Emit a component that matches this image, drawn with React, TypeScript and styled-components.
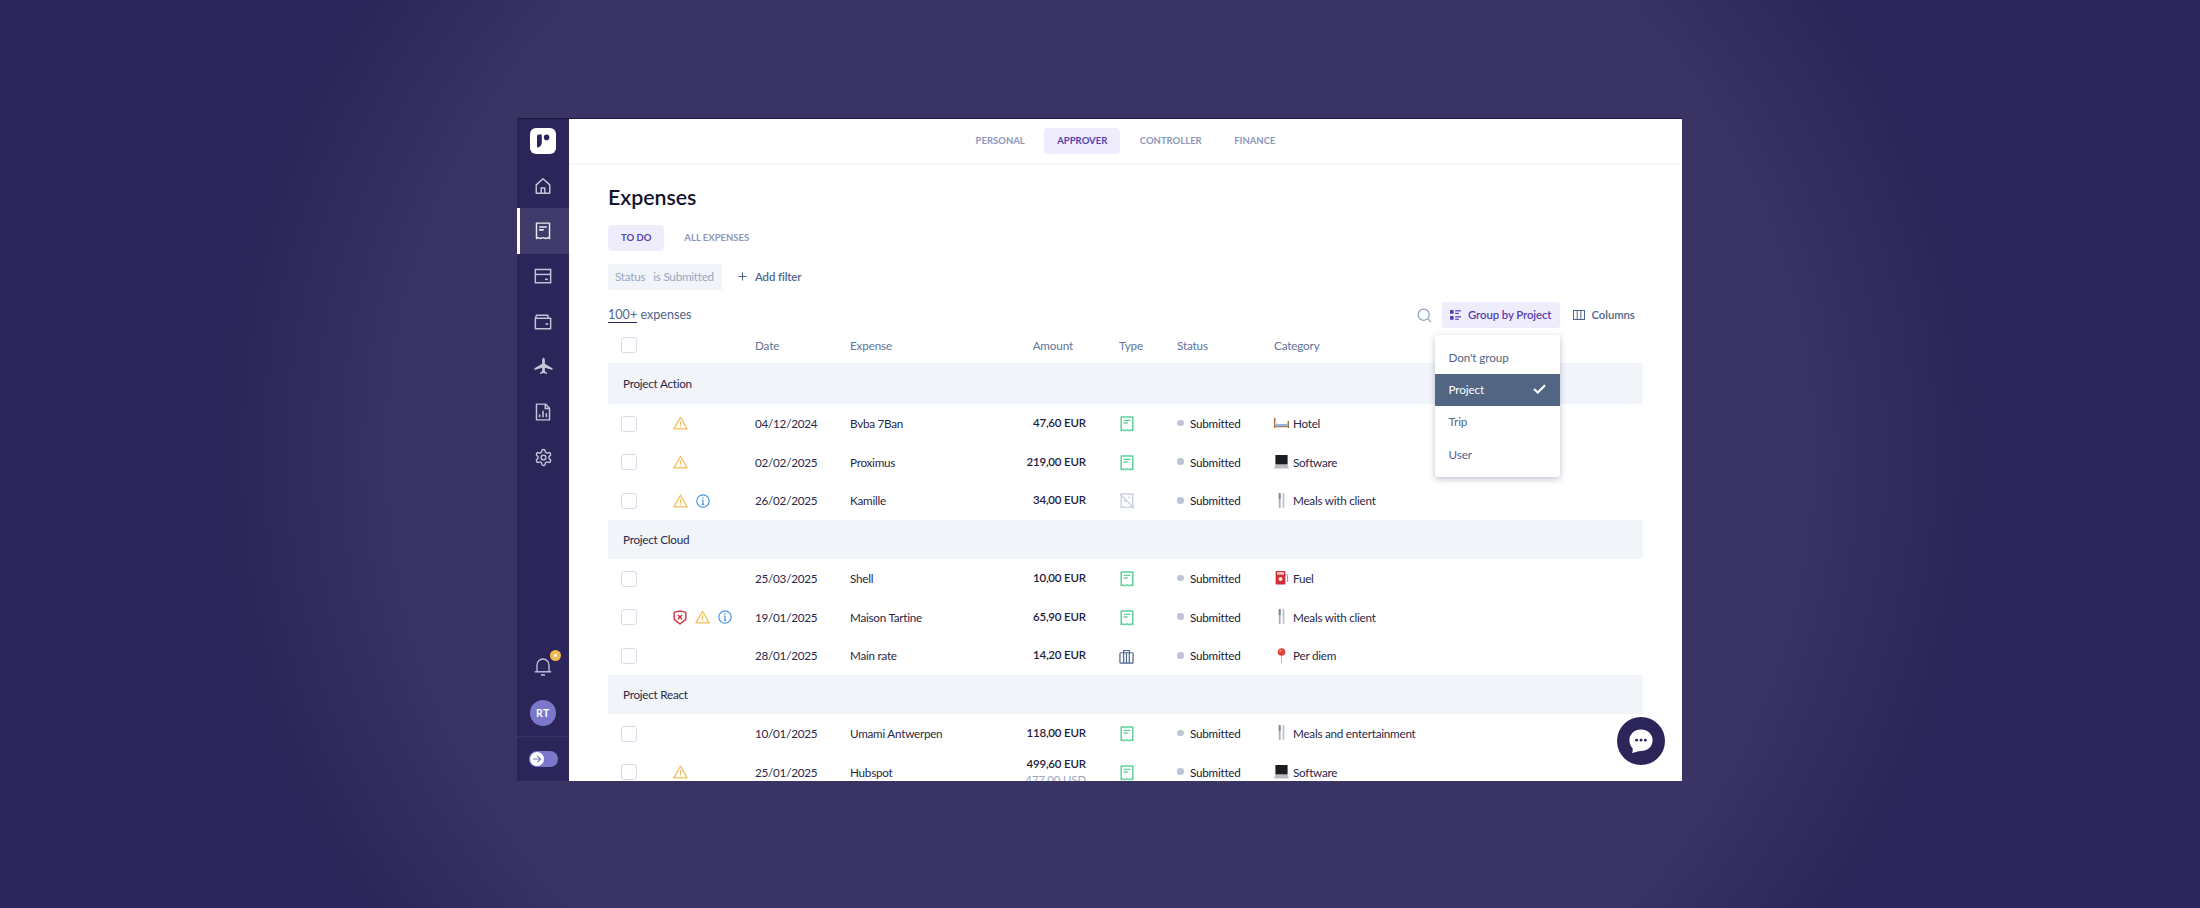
import React from "react";
import styled, { createGlobalStyle } from "styled-components";

const Global = createGlobalStyle`
  html, body { margin: 0; padding: 0; height: 100%; }
  body { font-family: "Lato", "Liberation Sans", sans-serif; overflow: hidden; }
  #root { height: 100%; }
`;

const Page = styled.div`
  width: 2200px;
  height: 908px;
  box-sizing: border-box;
  padding: 118px 0 0 517px;
  background: radial-gradient(874px 833px at 50% 50%, #3a3465 0%, #3a3465 80%, #2b2559 100%);
  overflow: hidden;
`;
const Window = styled.div`
  width: 1165px;
  height: 663px;
  display: flex;
  overflow: hidden;
  border-top: 1px solid #1e1a42;
  box-sizing: border-box;
  background: #fff;
`;
const Sidebar = styled.nav`
  width: 52px;
  flex: none;
  background: #2b2559;
  display: flex;
  flex-direction: column;
  color: #c2c6da;
`;
const LogoRow = styled.div`
  height: 44px;
  flex: none;
  display: flex;
  align-items: center;
  justify-content: center;
`;
const Logo = styled.div`
  width: 26px;
  height: 26px;
  border-radius: 6px;
  background: #fff;
  display: flex;
  align-items: center;
  justify-content: center;
`;
const NavItem = styled.div<{ $active?: boolean }>`
  height: 45.3px;
  flex: none;
  display: flex;
  align-items: center;
  justify-content: center;
  box-sizing: border-box;
  background: ${(p) => (p.$active ? "#413b6c" : "transparent")};
  border-left: 3px solid ${(p) => (p.$active ? "#fff" : "transparent")};
  padding-right: 3px;
  color: ${(p) => (p.$active ? "#e9e9f3" : "#c2c6da")};
`;
const SideBottom = styled.div`
  margin-top: auto;
  display: flex;
  flex-direction: column;
  align-items: center;
`;
const BellWrap = styled.div`
  position: relative;
  width: 18px;
  height: 20px;
  margin-bottom: 23px;
  color: #c2c6da;
`;
const Badge = styled.span`
  position: absolute;
  top: -7px;
  right: -9px;
  width: 11px;
  height: 11px;
  border-radius: 50%;
  background: #f0b94f;
  display: flex;
  align-items: center;
  justify-content: center;
  &::after {
    content: "";
    width: 3px;
    height: 3px;
    border-radius: 50%;
    background: #fff;
  }
`;
const Avatar = styled.div`
  width: 26px;
  height: 26px;
  border-radius: 50%;
  background: #7b78cb;
  color: #fff;
  font-size: 10.5px;
  font-weight: 700;
  letter-spacing: 0.5px;
  display: flex;
  align-items: center;
  justify-content: center;
`;
const SideDivider = styled.div`
  width: 100%;
  height: 1px;
  background: #3a3466;
  margin: 10px 0 14px;
`;
const Toggle = styled.div`
  width: 29px;
  height: 16.5px;
  border-radius: 9px;
  background: #7b78cb;
  display: flex;
  align-items: center;
  padding-left: 1px;
  box-sizing: border-box;
  margin-bottom: 14px;
`;
const ToggleKnob = styled.div`
  width: 14px;
  height: 14px;
  border-radius: 50%;
  background: #fff;
  color: #7b78cb;
  display: flex;
  align-items: center;
  justify-content: center;
`;
const Main = styled.main`
  flex: 1;
  min-width: 0;
  position: relative;
  display: flex;
  flex-direction: column;
`;
const TopBar = styled.header`
  height: 44px;
  flex: none;
  display: flex;
  align-items: center;
  justify-content: center;
  gap: 6.5px;
  box-shadow: 0 1px 3px rgba(43, 37, 89, 0.07);
`;
const Pill = styled.div<{ $active?: boolean }>`
  height: 26px;
  padding: 0 13px 1.5px;
  box-sizing: border-box;
  display: flex;
  align-items: center;
  border-radius: 4px;
  font-size: 9.5px;
  font-weight: 700;
  white-space: nowrap;
  text-transform: uppercase;
  background: ${(p) => (p.$active ? "#efecfc" : "transparent")};
  color: ${(p) => (p.$active ? "#5541ad" : "#8c98bb")};
`;
const Content = styled.section`
  padding: 20px 39px 0;
  display: flex;
  flex-direction: column;
`;
const Title = styled.h1`
  margin: 0;
  font-size: 21.3px;
  line-height: 28px;
  font-weight: 600;
  color: #14132e;
`;
const SubTabs = styled.div`
  display: flex;
  gap: 7px;
  margin-top: 14px;
`;
const Filters = styled.div`
  display: flex;
  align-items: center;
  margin-top: 13px;
  height: 25.5px;
`;
const FilterChip = styled.div`
  width: 114px;
  height: 100%;
  box-sizing: border-box;
  background: #f1f4f9;
  border-radius: 2px;
  padding: 0 0 1.5px 7px;
  display: flex;
  align-items: center;
  gap: 8px;
  font-size: 11.7px;
  letter-spacing: -0.25px;
  color: #99a6c2;
`;
const AddFilter = styled.div`
  margin-left: 16px;
  padding-bottom: 1.5px;
  display: flex;
  align-items: center;
  gap: 8px;
  font-size: 11.4px;
  font-weight: 600;
  letter-spacing: -0.1px;
  color: #50658a;
`;
const Toolbar = styled.div`
  margin-top: 12.5px;
  height: 26px;
  display: flex;
  align-items: center;
  justify-content: space-between;
`;
const Count = styled.div`
  font-size: 12.6px;
  padding-bottom: 1px;
  color: #50658a;
`;
const CountNum = styled.span`
  color: #50658a;
  border-bottom: 1px solid #2b2559;
`;
const Tools = styled.div`
  display: flex;
  align-items: center;
  margin-right: 7px;
  color: #50658a;
`;
const SearchIcon = styled.div`
  display: flex;
  margin-right: 10px;
  color: #8c9cbd;
`;
const GroupWrap = styled.div`
  position: relative;
`;
const GroupButton = styled.div`
  width: 117.5px;
  height: 26px;
  box-sizing: border-box;
  border-radius: 3px;
  background: #efecfc;
  color: #5541ad;
  display: flex;
  align-items: center;
  gap: 7px;
  padding: 0 0 1px 8px;
  font-size: 11.4px;
  font-weight: 600;
  letter-spacing: -0.1px;
  white-space: nowrap;
`;
const ColumnsButton = styled.div`
  width: 63.5px;
  margin-left: 13px;
  padding-bottom: 1px;
  display: flex;
  align-items: center;
  gap: 7px;
  font-size: 11.4px;
  font-weight: 600;
  letter-spacing: -0.1px;
`;
const Dropdown = styled.div`
  position: absolute;
  top: 33px;
  right: 0;
  width: 124.5px;
  height: 142px;
  padding-top: 6.5px;
  box-sizing: border-box;
  background: #fff;
  border-radius: 3px;
  box-shadow: 0 2px 6px rgba(40, 50, 90, 0.3);
  z-index: 3;
`;
const DropItem = styled.div<{ $active?: boolean }>`
  height: 32.3px;
  box-sizing: border-box;
  padding: 0 14px 2px 13.5px;
  display: flex;
  align-items: center;
  justify-content: space-between;
  font-size: 11.7px;
  letter-spacing: -0.1px;
  background: ${(p) => (p.$active ? "#526583" : "transparent")};
  color: ${(p) => (p.$active ? "#fff" : "#50658a")};
`;
const Grid = styled.div`
  display: grid;
  grid-template-columns: 65px 82px 95px 130px 106px 33px 58px 97px 1fr;
  align-items: center;
  box-sizing: border-box;
`;
const HeadRow = styled(Grid)`
  height: 35px;
  padding-bottom: 1.5px;
  font-size: 11.7px;
  letter-spacing: -0.15px;
  color: #61749a;
`;
const GroupRow = styled.div<{ $first?: boolean }>`
  height: ${(p) => (p.$first ? "41px" : "38.6px")};
  box-sizing: border-box;
  background: #f1f4f9;
  padding: 0 0 1.5px 15px;
  display: flex;
  align-items: center;
  font-size: 11.7px;
  letter-spacing: -0.25px;
  color: #2a2848;
`;
const Row = styled(Grid)`
  height: 38.8px;
  padding-bottom: 1px;
  font-size: 11.7px;
  letter-spacing: -0.25px;
  color: #2a2848;
`;
const CheckCell = styled.div<{ $body?: boolean }>`
  padding-left: 13px;
  margin-top: ${(p) => (p.$body ? "1.5px" : "0")};
  display: flex;
`;
const Checkbox = styled.div`
  width: 16px;
  height: 16px;
  box-sizing: border-box;
  border: 1.5px solid #d6dce8;
  border-radius: 3px;
  background: #fff;
`;
const Flags = styled.div`
  display: flex;
  align-items: center;
  gap: 8px;
  margin-top: 1px;
`;
const Amount = styled.div`
  display: flex;
  flex-direction: column;
  align-items: flex-end;
  font-size: 11.5px;
  font-weight: 600;
  letter-spacing: -0.17px;
  color: #1f1d3f;
  line-height: 16px;
`;
const AmountSub = styled.span`
  font-weight: 400;
  color: #99a6c2;
`;
const HeadAmount = styled.div`
  text-align: right;
  padding-right: 13px;
`;
const TypeCell = styled.div`
  display: flex;
  margin-top: 2px;
`;
const Status = styled.div`
  display: flex;
  align-items: center;
  gap: 6.5px;
  color: #1a1838;
`;
const Dot = styled.span`
  width: 6.5px;
  height: 6.5px;
  border-radius: 50%;
  background: #bcc4d6;
`;
const Category = styled.div`
  display: flex;
  align-items: center;
  gap: 4px;
`;
const ChatButton = styled.div`
  position: absolute;
  right: 17px;
  bottom: 16.5px;
  width: 48px;
  height: 48px;
  border-radius: 50%;
  background: #2b2559;
  display: flex;
  align-items: center;
  justify-content: center;
  z-index: 4;
`;
const GreenMark = styled.span`
  color: #5fd29a;
  display: flex;
`;

const Svg = ({ s = 16, children, ...r }: any) => (
  <svg width={s} height={s} viewBox="0 0 16 16" fill="none" stroke="currentColor" strokeWidth={1.3} {...r}>
    {children}
  </svg>
);
const Home = () => (
  <Svg s={18}>
    <path d="M8 1.6 2 7v7.4h12V7L8 1.6Z" strokeLinejoin="round" />
    <path d="M6.4 14.4V9.8h3.2v4.6" />
  </Svg>
);
const Receipt = ({ s = 18, w = 1.3 }: { s?: number; w?: number }) => (
  <Svg s={s} strokeWidth={w}>
    <path d="M2.2 1h11.6v13.7l-1.6-.8-1.6.8-2.6-.8-2.6.8-1.6-.8-1.6.8V1Z" strokeLinejoin="round" />
    <path d="M4.6 4.4h6.8M4.6 7h4" strokeWidth={1.4} />
  </Svg>
);
const GreenReceipt = () => (
  <GreenMark>
    <Receipt s={16} w={1.5} />
  </GreenMark>
);
const NoReceipt = () => (
  <Svg s={16} style={{ color: "#c9d0e0" }}>
    <path d="M2.2 1h11.6v13.7l-2-.8-3.8.8-3.8-.8-2 .8V1Z" />
    <path d="M1 1l14 14M4.6 8h3M9 4.4h2.4" />
  </Svg>
);
const Suitcase = () => (
  <Svg s={15} style={{ color: "#50658a" }}>
    <rect x="1" y="4" width="14" height="11" rx="1" />
    <path d="M5 15V1.6h6V15M8 4v11" />
  </Svg>
);
const Card = () => (
  <Svg s={18}>
    <rect x="1.2" y="2.2" width="13.6" height="11.8" />
    <path d="M1.2 6.6h13.6" />
    <path d="M9.8 11h2.6" strokeWidth={1.4} />
  </Svg>
);
const Wallet = () => (
  <Svg s={18}>
    <path d="M1.2 4.6V14h13.6V4.6H1.2Zm0 0 1-2.6h10.2v2.6" strokeLinejoin="round" />
    <path d="M10.2 9.8h2.4" strokeWidth={1.4} />
  </Svg>
);
const Plane = () => (
  <svg width="19" height="19" viewBox="0 0 18 18" fill="currentColor">
    <path d="M9 .6c.8 0 1.3 1.2 1.3 2.6v3.2l7.2 4.3v1.6l-7.2-2.100v3.200l2 1.500v1.300L9 15.200l-3.300 1v-1.300l2-1.500v-3.200L.5 12.300v-1.600l7.200-4.300V3.200C7.700 1.800 8.200.6 9 .6Z" />
  </svg>
);
const Report = () => (
  <Svg s={18}>
    <path d="M2.2 1h8l3.6 3.6V15H2.2V1Z" strokeLinejoin="round" />
    <path d="M10 1v3.8h3.8" />
    <path d="M5 12.6v-2.4M8 12.6V6.8M11 12.6V9" strokeWidth={1.4} />
  </Svg>
);
const Gear = () => (
  <svg width="19" height="19" viewBox="0 0 24 24" fill="none" stroke="currentColor" strokeWidth="1.8" strokeLinejoin="round">
    <path d="M12.22 2h-.44a2 2 0 0 0-2 2v.18a2 2 0 0 1-1 1.73l-.43.25a2 2 0 0 1-2 0l-.15-.08a2 2 0 0 0-2.73.73l-.22.38a2 2 0 0 0 .73 2.73l.15.1a2 2 0 0 1 1 1.72v.51a2 2 0 0 1-1 1.74l-.15.09a2 2 0 0 0-.73 2.73l.22.38a2 2 0 0 0 2.73.73l.15-.08a2 2 0 0 1 2 0l.43.25a2 2 0 0 1 1 1.73V20a2 2 0 0 0 2 2h.44a2 2 0 0 0 2-2v-.18a2 2 0 0 1 1-1.73l.43-.25a2 2 0 0 1 2 0l.15.08a2 2 0 0 0 2.73-.73l.22-.39a2 2 0 0 0-.73-2.73l-.15-.08a2 2 0 0 1-1-1.74v-.5a2 2 0 0 1 1-1.74l.15-.09a2 2 0 0 0 .73-2.73l-.22-.38a2 2 0 0 0-2.73-.73l-.15.08a2 2 0 0 1-2 0l-.43-.25a2 2 0 0 1-1-1.73V4a2 2 0 0 0-2-2z" />
    <circle cx="12" cy="12" r="3" />
  </svg>
);
const Bell = () => (
  <svg width="18" height="20" viewBox="0 0 18 20" fill="none" stroke="currentColor" strokeWidth="1.3">
    <path d="M3 14.6V8a6 6 0 0 1 12 0v6.6" />
    <path d="M.8 14.8h16.4" strokeWidth="1.4" />
    <path d="M7 18h4" strokeWidth="1.5" />
  </svg>
);
const Warning = () => (
  <svg width="15" height="14" viewBox="0 0 15 14" fill="none" stroke="#f0bd5c" strokeWidth="1.2" strokeLinejoin="round">
    <path d="M7.5 1.2 .9 12.9h13.2L7.5 1.2Z" />
    <path d="M7.5 5v4.4M7.5 10.2v1" />
  </svg>
);
const Info = () => (
  <svg width="14" height="14" viewBox="0 0 14 14" fill="none" stroke="#4a94e8" strokeWidth="1.2">
    <circle cx="7" cy="7" r="6.2" />
    <path d="M7 6v4.4M5.8 10.4h2.4M5.8 6H7" />
    <path d="M7 3.2v1.2" strokeWidth="1.4" />
  </svg>
);
const Shield = () => (
  <svg width="14" height="15" viewBox="0 0 14 15" fill="none" stroke="#c8323c" strokeWidth="1.4" strokeLinejoin="round">
    <path d="M7 .9 12.8 2.4v7L7 14 1.2 9.4v-7L7 .9Z" />
    <path d="M4.9 5 9.1 9.2M9.1 5 4.9 9.2" />
  </svg>
);
const SearchGlyph = () => (
  <svg width="15" height="15" viewBox="0 0 15 15" fill="none" stroke="currentColor" strokeWidth="1.2">
    <circle cx="6.7" cy="6.7" r="5.6" />
    <path d="m10.9 10.9 3.2 3.2" />
  </svg>
);
const GroupGlyph = () => (
  <svg width="11" height="10" viewBox="0 0 11 10" fill="currentColor">
    <rect x="0" y="0" width="3.6" height="3.8" rx=".6" />
    <rect x="0" y="6" width="3.6" height="3.8" rx=".6" />
    <rect x="5.2" y=".2" width="5.8" height="1.2" />
    <rect x="5.2" y="2.8" width="3.6" height="1.2" />
    <rect x="5.2" y="6.2" width="5.8" height="1.2" />
    <rect x="5.2" y="8.6" width="3.6" height="1.2" />
  </svg>
);
const ColumnsGlyph = () => (
  <svg width="12" height="10" viewBox="0 0 12 10" fill="none" stroke="currentColor" strokeWidth="1">
    <rect x=".5" y=".5" width="11" height="9" />
    <path d="M4.2 .5v9M7.8 .5v9" />
  </svg>
);
const Plus = () => (
  <svg width="9" height="9" viewBox="0 0 9 9" stroke="currentColor" strokeWidth="1.1">
    <path d="M4.5 .5v8M.5 4.5h8" />
  </svg>
);
const Check = () => (
  <svg width="13" height="10" viewBox="0 0 13 10" fill="none" stroke="#fff" strokeWidth="2.1">
    <path d="m1 5 3.8 3.6L12 1.2" />
  </svg>
);
const Arrow = () => (
  <svg width="10" height="10" viewBox="0 0 10 10" fill="none" stroke="currentColor" strokeWidth="1.2">
    <path d="M1 5h7.5M5.4 1.8 8.6 5 5.4 8.2" />
  </svg>
);
const Bed = () => (
  <svg width="15" height="12" viewBox="0 0 15 12">
    <rect x="0" y="1" width="1.4" height="10" fill="#a5693c" />
    <rect x="13.6" y="4" width="1.4" height="7" fill="#a5693c" />
    <rect x="1.4" y="7" width="12.2" height="2.6" fill="#8fb6dd" />
    <rect x="1.4" y="9.2" width="12.2" height="1" fill="#a5693c" />
    <rect x="1.6" y="5.2" width="3" height="2" fill="#e9eef4" />
  </svg>
);
const Laptop = () => (
  <svg width="15" height="14" viewBox="0 0 15 14">
    <rect x="1.4" y="0" width="12.2" height="9.6" rx=".6" fill="#1c1c22" />
    <path d="M1.2 10h12.6l1.2 3.4H0L1.2 10Z" fill="#b9bcc0" />
  </svg>
);
const Cutlery = () => (
  <svg width="15" height="15" viewBox="0 0 15 15">
    <rect x="4.8" y="0" width="1.8" height="15" rx=".8" fill="#a8aeb6" />
    <rect x="4.8" y="0" width="1.8" height="6" fill="#7d838c" />
    <rect x="8.6" y="0" width="1.8" height="15" rx=".8" fill="#bfc4ca" />
  </svg>
);
const Fuel = () => (
  <svg width="15" height="15" viewBox="0 0 15 15">
    <rect x="1.6" y="1" width="9.8" height="13.4" rx="1" fill="#d12f35" />
    <rect x="3" y="2.2" width="7" height="2.4" fill="#f2d5d5" />
    <circle cx="6.5" cy="9" r="2" fill="#f6e3e3" />
    <path d="M12 4l1.6 1.6v6" stroke="#8a8f98" strokeWidth="1" fill="none" />
  </svg>
);
const Pin = () => (
  <svg width="15" height="15" viewBox="0 0 15 15">
    <rect x="7" y="6" width="1" height="9" fill="#b5b9bf" />
    <circle cx="7.5" cy="4" r="3.8" fill="#e0453a" />
    <circle cx="6.3" cy="2.8" r="1" fill="#f5a8a0" />
  </svg>
);

type Flag = "warn" | "info" | "shield";
type Kind = "receipt" | "none" | "case";
type Exp = { date: string; name: string; amt: string; sub?: string; flags: Flag[]; kind: Kind; cat: React.ReactNode; catName: string };

const groups: { title: string; rows: Exp[] }[] = [
  {
    title: "Project Action",
    rows: [
      { date: "04/12/2024", name: "Bvba 7Ban", amt: "47,60 EUR", flags: ["warn"], kind: "receipt", cat: <Bed />, catName: "Hotel" },
      { date: "02/02/2025", name: "Proximus", amt: "219,00 EUR", flags: ["warn"], kind: "receipt", cat: <Laptop />, catName: "Software" },
      { date: "26/02/2025", name: "Kamille", amt: "34,00 EUR", flags: ["warn", "info"], kind: "none", cat: <Cutlery />, catName: "Meals with client" },
    ],
  },
  {
    title: "Project Cloud",
    rows: [
      { date: "25/03/2025", name: "Shell", amt: "10,00 EUR", flags: [], kind: "receipt", cat: <Fuel />, catName: "Fuel" },
      { date: "19/01/2025", name: "Maison Tartine", amt: "65,90 EUR", flags: ["shield", "warn", "info"], kind: "receipt", cat: <Cutlery />, catName: "Meals with client" },
      { date: "28/01/2025", name: "Main rate", amt: "14,20 EUR", flags: [], kind: "case", cat: <Pin />, catName: "Per diem" },
    ],
  },
  {
    title: "Project React",
    rows: [
      { date: "10/01/2025", name: "Umami Antwerpen", amt: "118,00 EUR", flags: [], kind: "receipt", cat: <Cutlery />, catName: "Meals and entertainment" },
      { date: "25/01/2025", name: "Hubspot", amt: "499,60 EUR", sub: "477,00 USD", flags: ["warn"], kind: "receipt", cat: <Laptop />, catName: "Software" },
    ],
  },
];

const flagIcon = { warn: <Warning />, info: <Info />, shield: <Shield /> };
const kindIcon = { receipt: <GreenReceipt />, none: <NoReceipt />, case: <Suitcase /> };

export default function App() {
  return (
    <Page>
      <Global />
      <Window>
        <Sidebar>
          <LogoRow>
            <Logo>
              <svg width="16" height="16" viewBox="0 0 16 16" fill="#2b2559">
                <path d="M2 3.4A1.8 1.8 0 0 1 3.8 1.6h3v7.6c0 2.8-1.4 5-4.8 5.2V3.4Z" />
                <circle cx="11.6" cy="4.4" r="2.8" />
              </svg>
            </Logo>
          </LogoRow>
          <NavItem><Home /></NavItem>
          <NavItem $active><Receipt /></NavItem>
          <NavItem><Card /></NavItem>
          <NavItem><Wallet /></NavItem>
          <NavItem><Plane /></NavItem>
          <NavItem><Report /></NavItem>
          <NavItem><Gear /></NavItem>
          <SideBottom>
            <BellWrap>
              <Bell />
              <Badge />
            </BellWrap>
            <Avatar>RT</Avatar>
            <SideDivider />
            <Toggle>
              <ToggleKnob><Arrow /></ToggleKnob>
            </Toggle>
          </SideBottom>
        </Sidebar>
        <Main>
          <TopBar>
            <Pill>Personal</Pill>
            <Pill $active>Approver</Pill>
            <Pill>Controller</Pill>
            <Pill>Finance</Pill>
          </TopBar>
          <Content>
            <Title>Expenses</Title>
            <SubTabs>
              <Pill $active>To do</Pill>
              <Pill>All expenses</Pill>
            </SubTabs>
            <Filters>
              <FilterChip>
                <span>Status</span>
                <span>is Submitted</span>
              </FilterChip>
              <AddFilter>
                <Plus />
                Add filter
              </AddFilter>
            </Filters>
            <Toolbar>
              <Count>
                <CountNum>100+</CountNum> expenses
              </Count>
              <Tools>
                <SearchIcon><SearchGlyph /></SearchIcon>
                <GroupWrap>
                  <GroupButton>
                    <GroupGlyph />
                    Group by Project
                  </GroupButton>
                  <Dropdown>
                    <DropItem>Don't group</DropItem>
                    <DropItem $active>
                      Project
                      <Check />
                    </DropItem>
                    <DropItem>Trip</DropItem>
                    <DropItem>User</DropItem>
                  </Dropdown>
                </GroupWrap>
                <ColumnsButton>
                  <ColumnsGlyph />
                  Columns
                </ColumnsButton>
              </Tools>
            </Toolbar>
            <HeadRow>
              <CheckCell><Checkbox /></CheckCell>
              <div />
              <div>Date</div>
              <div>Expense</div>
              <HeadAmount>Amount</HeadAmount>
              <div />
              <div>Type</div>
              <div>Status</div>
              <div>Category</div>
            </HeadRow>
            {groups.map((g, gi) => (
              <React.Fragment key={g.title}>
                <GroupRow $first={gi === 0}>{g.title}</GroupRow>
                {g.rows.map((r) => (
                  <Row key={r.name}>
                    <CheckCell $body><Checkbox /></CheckCell>
                    <Flags>
                      {r.flags.map((f) => (
                        <React.Fragment key={f}>{flagIcon[f]}</React.Fragment>
                      ))}
                    </Flags>
                    <div>{r.date}</div>
                    <div>{r.name}</div>
                    <Amount>
                      <span>{r.amt}</span>
                      {r.sub && <AmountSub>{r.sub}</AmountSub>}
                    </Amount>
                    <div />
                    <TypeCell>{kindIcon[r.kind]}</TypeCell>
                    <Status>
                      <Dot />
                      Submitted
                    </Status>
                    <Category>
                      {r.cat}
                      {r.catName}
                    </Category>
                  </Row>
                ))}
              </React.Fragment>
            ))}
          </Content>
          <ChatButton>
            <svg width="26" height="26" viewBox="0 0 26 26">
              <path d="M13 1.4c6.6 0 11.6 4.6 11.6 10.8S19.6 23 13 23c-1.6 0-3 .2-4.4.8-1 .4-3.2 1-4.6 1.2.6-1.2.9-3 .7-4.6C2.6 18.4 1.4 15.4 1.4 12.2 1.4 6 6.4 1.4 13 1.4Z" fill="#fff" />
              <circle cx="8.6" cy="12.2" r="1.4" fill="#2b2559" />
              <circle cx="13" cy="12.2" r="1.4" fill="#2b2559" />
              <circle cx="17.4" cy="12.2" r="1.4" fill="#2b2559" />
            </svg>
          </ChatButton>
        </Main>
      </Window>
    </Page>
  );
}
